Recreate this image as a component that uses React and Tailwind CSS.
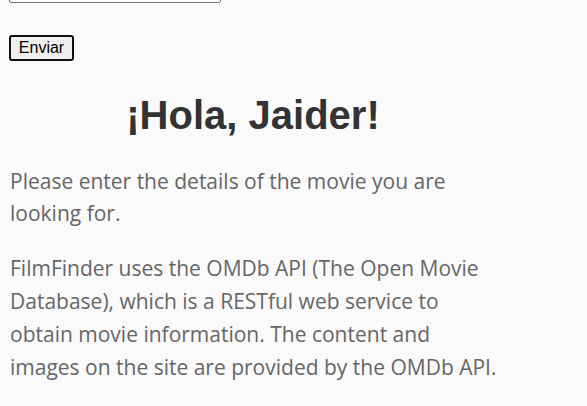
import React from "react";

const App = () => {
  return (
    <div className="min-h-screen bg-[#fafafa] px-[9px] overflow-hidden">
      <div className="-mt-[18px]">
        <input
          type="text"
          className="block w-[212px] h-[21px] border border-[#767676] rounded-[2px] bg-white"
        />
      </div>

      <button className="mt-[32px] w-[65px] h-[26px] border-2 border-[#101010] rounded-[3px] bg-[#efefef] text-[16px] text-black font-['Liberation_Sans',Arial,sans-serif] leading-none">
        Enviar
      </button>

      <h1 className="mt-[30px] w-[488px] text-center text-[40px] font-bold leading-[48px] text-[#333] font-['Liberation_Sans',Arial,sans-serif]">
        ¡Hola, Jaider!
      </h1>

      <div className="w-[489px] pl-px font-['Open_Sans','Noto_Sans',sans-serif] text-[21px] text-[#666]">
        <p className="mt-[26px] leading-[32px]">
          Please enter the details of the movie you are looking for.
        </p>
        <p className="mt-[23px] leading-[33px]">
          FilmFinder uses the OMDb API (The Open Movie Database), which is a
          RESTful web service to obtain movie information. The content and
          images on the site are provided by the OMDb API.
        </p>
      </div>
    </div>
  );
};

export default App;
